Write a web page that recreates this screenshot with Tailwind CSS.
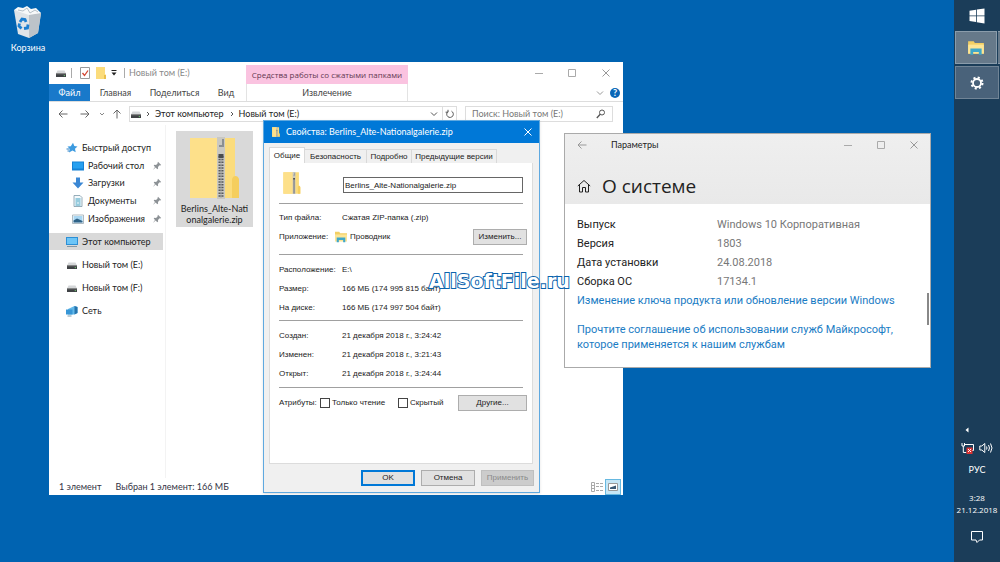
<!DOCTYPE html>
<html lang="ru">
<head>
    <meta charset="UTF-8">
    <meta name="viewport" content="width=device-width, initial-scale=1.0">
    <title>Рабочий стол</title>
    <script src="https://cdn.jsdelivr.net/npm/@tailwindcss/browser@4"></script>
</head>
<body class="flex h-screen overflow-hidden bg-[#0063b1] font-['Lato',sans-serif] text-[9px] leading-3 text-[#222]">

    <!-- Shared icons -->
    <svg class="hidden">
        <symbol id="drive" viewBox="0 0 12 10">
            <path d="M2.5 2.5h7l1.5 3H1z" fill="#d5d7d9"/>
            <path d="M1 5.5h10V9H1z" fill="#3f4245"/>
            <path d="M1 5.5h10v.8H1z" fill="#777"/>
            <circle cx="9.3" cy="7.6" r=".6" fill="#7be07b"/>
        </symbol>
        <symbol id="pin" viewBox="0 0 10 10">
            <path d="M6 .8 9.2 4l-1 .4-.6-.1L6 5.9l.1 1.6-.8.7-1.7-1.7L.9 9.1 3 5.9 1.7 4.6l.7-.8 1.7.1 1.6-1.6-.1-.6z" fill="#8d9296"/>
        </symbol>
        <symbol id="zip" viewBox="0 0 52 62" preserveAspectRatio="none">
            <path d="M1 1h45v39l4 3v18H1z" fill="#fbdc7c"/>
            <path d="M1 1h27v60H1z" fill="#fde08a"/>
            <path d="M43 42q1-3 3.5-3t3.5 3v19h-7z" fill="#f5ce5e"/>
            <path d="M28 0h8v62h-8z" fill="#c9c8c2"/>
            <path d="M32 19v42" stroke="#57585a" stroke-width="5" stroke-dasharray="1.5 1.3"/>
            <path d="M32 20v41" stroke="#a9aaab" stroke-width="1"/>
            <path d="M30 10h5V2h-2v6h-3z" fill="#8b8f92"/>
            <path d="M29.5 17h5v4h-5z" fill="#4a4c4e"/>
        </symbol>
        <symbol id="explorer" viewBox="0 0 16 14">
            <path d="M1 1h5l1 1.5h8V12H1z" fill="#f3cf63"/>
            <path d="M1 4h14v8H1z" fill="#fce596"/>
            <path d="M3 7.5h10V13h-2.5v-2.5h-5V13H3z" fill="#3fa7c9"/>
        </symbol>
    </svg>

    <main class="relative min-w-0 flex-1">

        <!-- Recycle bin -->
        <button class="absolute top-1 left-1 flex w-12 flex-col items-center gap-0.5 text-white">
            <svg class="h-9 w-8" viewBox="0 0 32 36">
                <path d="M2 6 27 8l2 1-3 20-9 5-11-4z" fill="#dfe4e8"/>
                <path d="m17 10 12-1-3 20-9 5z" fill="#bcc3c9"/>
                <path d="m2 6 4-3 5 1 4-2 4 3 5-1 5 5-12 2z" fill="#f7f9fa"/>
                <path d="m6 6 5 1 4-3 3 5 5-3 3 2" fill="none" stroke="#b5c0c8"/>
                <path d="m8 18 2-3 3 .5 1 2.5M7.5 19.5 7 22l2.5 2.5M16 20.5l-.5 3.5-3.5.5" fill="none" stroke="#1b7ed0" stroke-width="2.8"/>
            </svg>
            <span>Корзина</span>
        </button>

        <!-- Explorer window -->
        <section class="absolute top-[62px] left-[49px] flex h-[433px] w-[574px] flex-col bg-white" aria-label="Новый том (E:)">
            <header class="relative">
                <div class="flex h-[22px] items-center pl-1.5 text-[#888]">
                    <svg class="h-2.5 w-3"><use href="#drive"/></svg>
                    <i class="ml-1 h-2.5 w-px bg-[#aaa]"></i>
                    <svg class="ml-2 h-3 w-2.5" viewBox="0 0 10 12"><path d="M.5.5h9v11h-9z" fill="#fff" stroke="#9a9a9a"/><path d="m2.5 6 2 2.5 3.5-5" fill="none" stroke="#d3442f" stroke-width="1.3"/></svg>
                    <svg class="ml-1.5 h-3 w-2.5" viewBox="0 0 10 12"><path d="M0 0h9v7l1 1v4H0z" fill="#fbdc7c"/><path d="M8 8h2v4H8z" fill="#eabf4d"/></svg>
                    <svg class="ml-1 h-2 w-2" viewBox="0 0 8 8"><path d="M1.5 1.5h5" stroke="#222"/><path d="M1.5 3.5h5L4 6.5z" fill="#222"/></svg>
                    <i class="ml-1.5 h-2.5 w-px bg-[#aaa]"></i>
                    <span class="ml-1">Новый том (E:)</span>
                    <div class="ml-auto flex">
                        <button class="grid w-[33px] place-items-center" aria-label="Свернуть"><svg class="size-2.5" viewBox="0 0 10 10"><path d="M1 5.5h8" stroke="#aaa"/></svg></button>
                        <button class="grid w-[33px] place-items-center" aria-label="Развернуть"><svg class="size-2.5" viewBox="0 0 10 10"><path d="M1.5 1.5h7v7h-7z" fill="none" stroke="#aaa"/></svg></button>
                        <button class="grid w-[35px] place-items-center" aria-label="Закрыть"><svg class="size-2.5" viewBox="0 0 10 10"><path d="m1.5 1.5 7 7m0-7-7 7" stroke="#999"/></svg></button>
                    </div>
                </div>
                <nav class="flex h-[18px] items-center border-b border-[#ddd] text-[#444]">
                    <button class="h-[17px] w-[41px] bg-[#1979ca] text-white">Файл</button>
                    <button class="w-[51px]">Главная</button>
                    <button class="w-[67px]">Поделиться</button>
                    <button class="w-[36px]">Вид</button>
                    <svg class="ml-auto size-2" viewBox="0 0 8 8"><path d="m1 2.5 3 3 3-3" fill="none" stroke="#999"/></svg>
                    <button class="mr-[3px] ml-1.5 size-2.5 rounded-full bg-[#0a66b7] leading-[10px] font-bold text-white" aria-label="Справка">?</button>
                </nav>
                <div class="absolute top-[3px] left-[197px] flex w-[162px] flex-col text-center">
                    <span class="h-[19px] bg-[#fac3e0] font-['Open_Sans',sans-serif] text-[8px] leading-[19px] whitespace-nowrap text-[#633850]">Средства работы со сжатыми папками</span>
                    <button class="h-[17px] border-x border-[#e3e3e3] text-[#444]">Извлечение</button>
                </div>
            </header>

            <!-- Address bar -->
            <div class="flex h-[23px] items-center gap-1 pr-2.5 pl-2">
                <svg class="h-3 w-[68px]" viewBox="0 0 68 12" fill="none" stroke="#666">
                    <path d="M10.5 6H2m3.5-3.5L2 6l3.5 3.5M23.5 6H32m-3.5-3.5L32 6l-3.5 3.5"/>
                    <path d="m43 5 2 2 2-2" stroke="#888"/>
                    <path d="M60 10.5V2m-3.5 3.5L60 2l3.5 3.5"/>
                </svg>
                <div class="flex h-4 min-w-0 flex-1 items-center border border-[#ddd]">
                    <svg class="h-2.5 w-3"><use href="#drive"/></svg>
                    <svg class="ml-0.5 size-2" viewBox="0 0 8 8"><path d="m3 2 2 2-2 2" fill="none" stroke="#555"/></svg>
                    <button class="ml-[3px]">Этот компьютер</button>
                    <svg class="ml-1 size-2" viewBox="0 0 8 8"><path d="m3 2 2 2-2 2" fill="none" stroke="#555"/></svg>
                    <button class="ml-[3px]">Новый том (E:)</button>
                    <svg class="ml-auto size-2" viewBox="0 0 8 8"><path d="m1 2.5 3 3 3-3" fill="none" stroke="#555"/></svg>
                    <button class="ml-1 grid h-4 w-[14px] place-items-center border-l border-[#ddd]" aria-label="Обновить"><svg class="size-2.5" viewBox="0 0 10 10"><path d="M6.5 2.2a3.3 3.3 0 1 1-3.7.5M3 .8v2.4H.6" fill="none" stroke="#555"/></svg></button>
                </div>
                <div class="ml-1 flex h-4 w-[148px] items-center border border-[#ddd] px-1.5">
                    <input class="min-w-0 flex-1 placeholder:text-[#777]" aria-label="Поиск" placeholder="Поиск: Новый том (E:)">
                    <svg class="size-2.5" viewBox="0 0 10 10" fill="none" stroke="#555"><circle cx="6" cy="3.5" r="2.5"/><path d="M4.2 5.3.8 9" stroke-width="1.3"/></svg>
                </div>
            </div>

            <div class="flex min-h-0 flex-1">
                <!-- Navigation pane -->
                <nav class="flex w-[117px] flex-col border-r border-[#f3f3f3] pt-3.5">
                    <a href="#" class="flex h-[18px] items-center gap-1 pl-[17px]">
                        <svg class="size-3" viewBox="0 0 12 12"><path d="m7 .8 1.3 3.3 3.2.3L9 6.7l.7 3.6-3.2-1.8L3 10.500l.8-3.6-2.3-2.4 3.3-.3z" fill="#3d9be0"/><path d="M.5 7h3M1.5 9h2" stroke="#2b7fc4"/></svg>
                        Быстрый доступ
                    </a>
                    <a href="#" class="flex h-[17px] items-center gap-1 pr-[3px] pl-[23px]">
                        <svg class="size-3" viewBox="0 0 12 12"><path d="M0 1.5h12v9H0z" fill="#1581d5"/><path d="M1 2.5h10v6H1z" fill="#27a0f0"/></svg>
                        Рабочий стол<svg class="ml-auto size-2.5"><use href="#pin"/></svg>
                    </a>
                    <a href="#" class="flex h-[18px] items-center gap-1 pr-[3px] pl-[23px]">
                        <svg class="size-3" viewBox="0 0 12 12"><path d="M4 .5h4v5h3.5L6 11.5.5 5.5H4z" fill="#3a87d4"/></svg>
                        Загрузки<svg class="ml-auto size-2.5"><use href="#pin"/></svg>
                    </a>
                    <a href="#" class="flex h-[18px] items-center gap-1 pr-[3px] pl-[23px]">
                        <svg class="size-3" viewBox="0 0 12 12"><path d="M2 .5h6l2 2v9H2z" fill="#f4f9fc" stroke="#7d99a8" stroke-width=".8"/><path d="M3.5 4h5M3.5 6h5M3.5 8h2m1 0h2M3.5 10h5" stroke="#3a9fc0"/></svg>
                        Документы<svg class="ml-auto size-2.5"><use href="#pin"/></svg>
                    </a>
                    <a href="#" class="flex h-[17px] items-center gap-1 pr-[3px] pl-[23px]">
                        <svg class="size-3" viewBox="0 0 12 12"><path d="M.5 2h11v8.5H.5z" fill="#fff" stroke="#9aa9b3" stroke-width=".8"/><path d="M1.5 3h9v6.5h-9z" fill="#a9d7f3"/><path d="M1.5 7.5 5 5.5l5.5 2.5v1.5h-9z" fill="#2e6287"/></svg>
                        Изображения<svg class="ml-auto size-2.5"><use href="#pin"/></svg>
                    </a>
                    <a href="#" class="mt-1.5 mr-0.5 mb-[3px] flex h-[17px] items-center gap-1 bg-[#d9d9d9] pl-[17px]">
                        <svg class="size-3" viewBox="0 0 12 12"><path d="M0 1h12v8H0z" fill="#2d8fd5"/><path d="M1 2h10v6H1z" fill="#6cc5f7"/><path d="M1 10.5h10" stroke="#8498a5"/></svg>
                        Этот компьютер
                    </a>
                    <a href="#" class="flex h-[23px] items-center gap-1 pl-[17px]"><svg class="h-2.5 w-3"><use href="#drive"/></svg>Новый том (E:)</a>
                    <a href="#" class="flex h-[23px] items-center gap-1 pl-[17px]"><svg class="h-2.5 w-3"><use href="#drive"/></svg>Новый том (F:)</a>
                    <a href="#" class="flex h-[23px] items-center gap-1 pl-[17px]">
                        <svg class="size-3" viewBox="0 0 12 12"><path d="m2 4 6.5-3 3 1v6l-3 1.5H2z" fill="#63b9ea"/><path d="M8.5 1v8.5l3-1.5V2z" fill="#2674ad"/><path d="M0 4.5h6.5v5H0z" fill="#3796d6"/><path d="M1.5 11h4" stroke="#7d99a8"/></svg>
                        Сеть
                    </a>
                </nav>

                <!-- Files -->
                <div class="flex-1 pt-1.5 pl-[10px]">
                    <button class="flex h-24 w-[77px] flex-col items-center bg-[#d9d9d9] pt-1.5 leading-[11px]">
                        <svg class="h-[62px] w-[52px] shrink-0"><use href="#zip"/></svg>
                        <span class="mt-1 whitespace-nowrap">Berlins_Alte-Nati<br>onalgalerie.zip</span>
                    </button>
                </div>
            </div>

            <footer class="flex h-[17px] items-center pr-0.5 pl-2.5 text-[#334]">
                <span>1 элемент</span>
                <span class="ml-3.5">Выбран 1 элемент: 166 МБ</span>
                <button class="ml-auto p-0.5" aria-label="Таблица"><svg class="h-2.5 w-3" viewBox="0 0 12 10" stroke="#aaa" fill="none"><path d="M.5.5h3v9h-3zM.5 3.5h3M.5 6.5h3M5 1.5h3m1 0h3M5 4.5h3m1 0h3M5 8.5h3m1 0h3"/></svg></button>
                <button class="border border-[#66b8e0] bg-[#c5e6f6] p-0.5" aria-label="Значки"><svg class="h-2.5 w-2.5" viewBox="0 0 10 10"><path d="M.5 1.5h9v7h-9z" fill="#fff" stroke="#999"/><path d="M2 7V5.5l3-1 3-1V7z" fill="#3c5a75"/></svg></button>
            </footer>
        </section>

        <!-- File properties dialog -->
        <form class="absolute top-[120px] left-[263px] flex h-[373px] w-[277px] flex-col border border-[#5fa9e0] bg-[#f0f0f0] font-['Liberation_Sans',sans-serif] text-[8px] shadow-sm" onsubmit="return false">
            <header class="flex h-[22px] items-center bg-[#0078d7] pr-1.5 pl-2 font-['Lato',sans-serif] text-[9px] text-white">
                <svg class="h-2.5 w-2"><use href="#zip"/></svg>
                <span class="ml-1.5">Свойства: Berlins_Alte-Nationalgalerie.zip</span>
                <button type="button" class="ml-auto" aria-label="Закрыть"><svg class="size-2.5" viewBox="0 0 10 10"><path d="m1.5 1.5 7 7m0-7-7 7" stroke="#fff"/></svg></button>
            </header>
            <div class="flex items-end pt-1 pl-[5px]">
                <button type="button" class="h-4 w-[36px] border border-b-0 border-[#d9d9d9] bg-white">Общие</button>
                <button type="button" class="h-3.5 w-[62px] border border-b-0 border-l-0 border-[#d9d9d9]">Безопасность</button>
                <button type="button" class="h-3.5 w-[45px] border border-b-0 border-l-0 border-[#d9d9d9]">Подробно</button>
                <button type="button" class="h-3.5 w-[85px] border border-b-0 border-l-0 border-[#d9d9d9] whitespace-nowrap">Предыдущие версии</button>
            </div>
            <div class="mr-1.5 ml-[5px] flex-1 border border-t-0 border-[#dcdcdc] bg-white px-[9px]">
                <div class="flex h-[41px] items-center border-b border-[#a0a0a0]">
                    <svg class="ml-1 h-[22px] w-[18px]"><use href="#zip"/></svg>
                    <input class="mt-1 ml-auto h-4 w-[180px] border border-[#666] px-px" aria-label="Имя файла" value="Berlins_Alte-Nationalgalerie.zip">
                </div>
                <dl class="grid h-[51px] grid-cols-[63px_1fr] grid-rows-2 items-center border-b border-[#a0a0a0] pt-1 pb-2">
                    <dt>Тип файла:</dt>
                    <dd>Сжатая ZIP-папка (.zip)</dd>
                    <dt>Приложение:</dt>
                    <dd class="-mr-1 -ml-2 flex items-center gap-0.5"><svg class="h-3 w-3.5"><use href="#explorer"/></svg>Проводник<button type="button" class="ml-auto h-4 w-[54px] border border-[#adadad] bg-[#e1e1e1]">Изменить...</button></dd>
                </dl>
                <dl class="grid h-[66px] grid-cols-[63px_1fr] grid-rows-3 items-center border-b border-[#a0a0a0] pt-[5px] pb-[3px]">
                    <dt>Расположение:</dt><dd>E:\</dd>
                    <dt>Размер:</dt><dd>166 МБ (174 995 815 байт)</dd>
                    <dt>На диске:</dt><dd>166 МБ (174 997 504 байт)</dd>
                </dl>
                <dl class="grid h-[67px] grid-cols-[63px_1fr] grid-rows-3 items-center border-b border-[#a0a0a0] pt-1.5 pb-1">
                    <dt>Создан:</dt><dd>21 декабря 2018 г., 3:24:42</dd>
                    <dt>Изменен:</dt><dd>21 декабря 2018 г., 3:21:43</dd>
                    <dt>Открыт:</dt><dd>21 декабря 2018 г., 3:24:44</dd>
                </dl>
                <div class="flex h-[30px] items-center">
                    <span class="w-[41px]">Атрибуты:</span>
                    <label class="flex w-[78px] items-center gap-0.5"><input type="checkbox" class="size-2.5 appearance-none border border-[#444] bg-white">Только чтение</label>
                    <label class="flex items-center gap-0.5"><input type="checkbox" class="size-2.5 appearance-none border border-[#444] bg-white">Скрытый</label>
                    <button type="button" class="-mr-1 ml-auto h-4 w-[69px] border border-[#adadad] bg-[#e1e1e1]">Другие...</button>
                </div>
            </div>
            <footer class="flex h-[28px] items-center justify-end gap-1.5 pr-[5px]">
                <button class="h-4 w-[54px] border-2 border-[#0078d7] bg-[#e1e1e1]">OK</button>
                <button type="button" class="h-4 w-[54px] border border-[#adadad] bg-[#e1e1e1]">Отмена</button>
                <button type="button" class="h-4 w-[53px] border border-[#bfbfbf] bg-[#ccc] text-[#8a8a8a]" disabled>Применить</button>
            </footer>
        </form>

        <!-- Settings window -->
        <section class="absolute top-[133px] left-[564px] h-[235px] w-[367px] border border-[#aaa] bg-white" aria-label="Параметры">
            <header class="h-[70px] bg-gradient-to-b from-[#efefef] to-[#e9e9e9]">
                <div class="flex h-[22px] items-center pl-3">
                    <button aria-label="Назад"><svg class="size-2.5" viewBox="0 0 10 10"><path d="M9.5 5H1m3.5-3.5L1 5l3.5 3.5" fill="none" stroke="#999"/></svg></button>
                    <span class="ml-6">Параметры</span>
                    <div class="ml-auto flex">
                        <button class="grid w-[33px] place-items-center" aria-label="Свернуть"><svg class="size-2.5" viewBox="0 0 10 10"><path d="M1 5.5h8" stroke="#aaa"/></svg></button>
                        <button class="grid w-[33px] place-items-center" aria-label="Развернуть"><svg class="size-2.5" viewBox="0 0 10 10"><path d="M1.5 1.5h7v7h-7z" fill="none" stroke="#aaa"/></svg></button>
                        <button class="grid w-[33px] place-items-center" aria-label="Закрыть"><svg class="size-2.5" viewBox="0 0 10 10"><path d="m1.5 1.5 7 7m0-7-7 7" stroke="#999"/></svg></button>
                    </div>
                </div>
                <div class="flex items-center gap-[11px] pt-[18px] pl-3">
                    <svg class="size-3.5" viewBox="0 0 14 14" fill="none" stroke="#222"><path d="M.8 7 7 1.5 13.2 7M2.5 5.8V13h3V8.5h3V13h3V5.8"/></svg>
                    <h1 class="font-['Open_Sans',sans-serif] text-[19px] leading-6">О системе</h1>
                </div>
            </header>
            <div class="px-3 pt-[11px] font-['Roboto',sans-serif] text-[11px] leading-[15px]">
                <dl class="grid grid-cols-[140px_1fr] leading-[19px]">
                    <dt>Выпуск</dt><dd class="text-[#777]">Windows 10 Корпоративная</dd>
                    <dt>Версия</dt><dd class="text-[#777]">1803</dd>
                    <dt>Дата установки</dt><dd class="text-[#777]">24.08.2018</dd>
                    <dt>Сборка ОС</dt><dd class="text-[#777]">17134.1</dd>
                </dl>
                <div class="flex flex-col gap-3.5 pt-0.5 text-[#1a7cc4]">
                    <a href="#">Изменение ключа продукта или обновление версии Windows</a>
                    <a href="#">Прочтите соглашение об использовании служб Майкрософт,<br>которое применяется к нашим службам</a>
                </div>
            </div>
            <i class="absolute right-px bottom-[42px] h-8 w-0.5 bg-[#888]"></i>
        </section>

        <!-- Watermark -->
        <svg class="absolute top-[270px] left-[426px] h-6 w-[146px] font-['DejaVu_Sans',sans-serif]" viewBox="0 0 146 24">
            <text x="3" y="18" font-size="19" font-weight="700" fill="#fff" stroke="#0b63ad" stroke-width="2" paint-order="stroke">AllSoftFile.ru</text>
        </svg>
    </main>

    <!-- Taskbar -->
    <aside class="flex w-[46px] flex-col items-center bg-[#1b3d59] text-white">
        <button class="grid h-[31px] place-items-center" aria-label="Пуск">
            <svg class="size-4" viewBox="0 0 16 16" fill="#fff"><path d="m.5 2.8 6.5-1v5.7H.5zM7.8 1.6l7.7-1.1v7H7.8zM.5 8.3H7V14l-6.5-.9zM7.8 8.3h7.7v7.2l-7.7-1.2z"/></svg>
        </button>
        <div class="flex h-[33px] w-[45px]">
            <button class="grid flex-1 place-items-center border border-[#8a9cab] bg-[#66798a]" aria-label="Проводник"><svg class="h-4 w-[18px]"><use href="#explorer"/></svg></button>
            <i class="ml-px w-0.5 border-y border-[#8a9cab] bg-[#66798a]"></i>
        </div>
        <button class="mt-0.5 grid h-[33px] w-11 place-items-center border border-[#708496] bg-[#49627a]" aria-label="Параметры">
            <svg class="size-4" viewBox="0 0 16 16" fill="none" stroke="#fff"><circle cx="8" cy="8" r="4" stroke-width="1.8"/><circle cx="8" cy="8" r="5.5" stroke-width="2" stroke-dasharray="2.1 2.22"/></svg>
        </button>
        <div class="mt-auto flex w-full flex-col items-center pb-[18px]">
            <svg class="mr-5 size-2" viewBox="0 0 8 8"><path d="M5.5 1.5v5L2.500 4z" fill="#fff"/></svg>
            <div class="mt-2 flex gap-1">
                <svg class="h-3 w-[14px]" viewBox="0 0 14 12" fill="none" stroke="#fff"><path d="M4 2.5h8.5v6H7M1 1v3h2.5V1M2.3 4v6.5h3"/><path d="M5.5 5.5h6V12h-6z" fill="#d93434" stroke="none"/><path d="m7 7 3 3m0-3-3 3"/></svg>
                <svg class="h-3 w-[14px]" viewBox="0 0 14 12" fill="none" stroke="#fff"><path d="M.8 4h2l3-2.5v9L2.8 8h-2zM7.5 4.5q1 1.5 0 3M9.5 3q2 3 0 6M11.5 1.5q3 4.5 0 9"/></svg>
            </div>
            <span class="mt-2.5">РУС</span>
            <time class="mt-4 text-center font-['Open_Sans',sans-serif] text-[8px]">3:28<br>21.12.2018</time>
            <button class="mt-3.5" aria-label="Уведомления"><svg class="size-3.5" viewBox="0 0 14 14" fill="none" stroke="#fff"><path d="M1.5 1.5h11V10h-3L7 12.500 6 10H1.500z"/></svg></button>
        </div>
    </aside>
</body>
</html>
